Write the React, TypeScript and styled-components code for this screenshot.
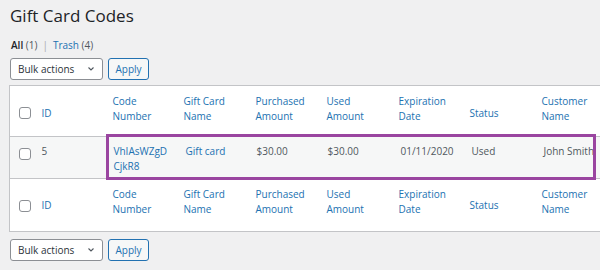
import React from 'react';
import styled, { createGlobalStyle } from 'styled-components';

const GlobalStyle = createGlobalStyle`
  html, body {
    margin: 0;
    padding: 0;
    background: #f0f0f1;
    overflow: hidden;
  }
  body {
    font-family: "Open Sans", "Noto Sans", sans-serif;
    color: #3c434a;
  }
`;

const Page = styled.div`
  width: 600px;
  height: 270px;
  padding: 0 0 0 9px;
  box-sizing: border-box;
  overflow: hidden;
`;

const Title = styled.h1`
  margin: 0;
  padding: 4px 0 0 1px;
  font-size: 17px;
  font-weight: 400;
  line-height: 23px;
  color: #1d2327;
`;

const Views = styled.ul`
  display: flex;
  list-style: none;
  margin: 12px 0 0 2px;
  padding: 0;
  font-size: 10px;
  line-height: 12px;
  color: #50575e;
`;

const ViewItem = styled.li<{ $current?: boolean }>`
  a {
    color: ${p => (p.$current ? '#1d2327' : '#2271b1')};
    font-weight: ${p => (p.$current ? 600 : 400)};
    text-decoration: none;
  }
  span {
    color: #50575e;
  }
`;

const Sep = styled.span`
  margin: 0 5px;
  color: #a7aaad;
`;

const Actions = styled.div`
  display: flex;
  gap: 5px;
  margin: 7px 0 0 1px;
`;

const Select = styled.div`
  width: 93px;
  height: 22px;
  box-sizing: border-box;
  border: 1px solid #8c8f94;
  border-radius: 3px;
  background: #fff;
  display: flex;
  align-items: center;
  justify-content: space-between;
  padding: 0 6px 0 7px;
  font-size: 10px;
  color: #2c3338;
`;

const ApplyButton = styled.button`
  height: 22px;
  width: 41px;
  box-sizing: border-box;
  border: 1px solid #2271b1;
  border-radius: 3px;
  background: #f6f7f7;
  color: #2271b1;
  font-family: inherit;
  font-size: 10px;
  padding: 0;
`;

const Table = styled.table`
  margin-top: 5px;
  width: 610px;
  border-collapse: collapse;
  background: #fff;
  border: 1px solid #c3c4c7;
  table-layout: fixed;
  font-size: 10px;
  line-height: 14.5px;
`;

const HeadCell = styled.th<{ $pad?: number; $head?: boolean; $multi?: boolean }>`
  padding-left: ${p => p.$pad ?? 7}px;
  padding-right: 0;
  padding-top: ${p => (p.$head ? 4 : 0)}px;
  padding-bottom: ${p => (p.$multi ? (p.$head ? 9 : 7) : 0)}px;
  text-align: left;
  font-weight: 400;
  color: #2271b1;
  vertical-align: middle;
`;

const HeadRow = styled.tr<{ $h: number; $top?: boolean }>`
  height: ${p => p.$h}px;
  ${p => (p.$top ? 'border-top: 1px solid #c3c4c7;' : 'border-bottom: 1px solid #c3c4c7;')}
`;

const DataRow = styled.tr`
  height: 42px;
  background: #f6f7f7;
`;

const Cell = styled.td<{ $pad?: number; $link?: boolean }>`
  padding: 7px 0 0 ${p => p.$pad ?? 8}px;
  vertical-align: top;
  color: ${p => (p.$link ? '#2271b1' : '#50575e')};
  word-break: break-all;
`;

const AnchorCell = styled(Cell)`
  position: relative;
`;

const Highlight = styled.div`
  position: absolute;
  left: 0;
  top: -3px;
  width: 490px;
  height: 46px;
  box-sizing: border-box;
  border: 3px solid #9a45a0;
  pointer-events: none;
`;

const Check = styled.span`
  display: inline-block;
  width: 12px;
  height: 12px;
  box-sizing: border-box;
  border: 1px solid #8c8f94;
  border-radius: 3px;
  background: #fff;
  vertical-align: middle;
`;

const CheckCell = styled.td<{ $top?: number; $head?: boolean }>`
  padding: ${p => (p.$top != null ? `${p.$top}px 0 0 9px` : `${p.$head ? 2 : 0}px 0 0 9px`)};
  vertical-align: ${p => (p.$top != null ? 'top' : 'middle')};
`;

const Chevron = () => (
  <svg width="10" height="10" viewBox="0 0 20 20" aria-hidden="true">
    <path d="M5 7l5 5 5-5" fill="none" stroke="#50575e" strokeWidth="2.2" />
  </svg>
);

const columns = [
  ['Code', 'Number'],
  ['Gift Card', 'Name'],
  ['Purchased', 'Amount'],
  ['Used', 'Amount'],
  ['Expiration', 'Date'],
  ['Status'],
  ['Customer', 'Name'],
];

const widths = [24, 72, 71, 72, 71, 72, 71, 72, 85];

const BulkActions: React.FC = () => (
  <Actions>
    <Select>
      <span>Bulk actions</span>
      <Chevron />
    </Select>
    <ApplyButton>Apply</ApplyButton>
  </Actions>
);

const HeaderCells: React.FC<{ head?: boolean }> = ({ head }) => (
  <>
    <CheckCell $head={head}>
      <Check />
    </CheckCell>
    <HeadCell $pad={8} $head={head}>
      ID
    </HeadCell>
    {columns.map(label => (
      <HeadCell key={label.join(' ')} $head={head} $multi={label.length > 1}>
        {label.map((l, i) => (
          <React.Fragment key={l}>
            {i > 0 && <br />}
            {l}
          </React.Fragment>
        ))}
      </HeadCell>
    ))}
  </>
);

const App: React.FC = () => (
  <Page>
    <GlobalStyle />
    <Title>Gift Card Codes</Title>
    <Views>
      <ViewItem $current>
        <a href="#">All</a> <span>(1)</span>
      </ViewItem>
      <Sep>|</Sep>
      <ViewItem>
        <a href="#">Trash</a> <span>(4)</span>
      </ViewItem>
    </Views>
    <BulkActions />
    <Table>
      <colgroup>
        {widths.map((w, i) => (
          <col key={i} style={{ width: w }} />
        ))}
      </colgroup>
      <thead>
        <HeadRow $h={51}>
          <HeaderCells head />
        </HeadRow>
      </thead>
      <tbody>
        <DataRow>
          <CheckCell $top={9}>
            <Check />
          </CheckCell>
          <Cell $pad={8}>5</Cell>
          <AnchorCell $link>
            VhIAsWZgD
            <br />
            CjkR8
            <Highlight />
          </AnchorCell>
          <Cell $link $pad={9}>Gift card</Cell>
          <Cell $pad={8}>$30.00</Cell>
          <Cell $pad={8}>$30.00</Cell>
          <Cell $pad={9}>01/11/2020</Cell>
          <Cell $pad={9}>Used</Cell>
          <Cell $pad={9}>John Smith</Cell>
        </DataRow>
      </tbody>
      <tfoot>
        <HeadRow $h={53} $top>
          <HeaderCells />
        </HeadRow>
      </tfoot>
    </Table>
    <BulkActions />
  </Page>
);

export default App;
